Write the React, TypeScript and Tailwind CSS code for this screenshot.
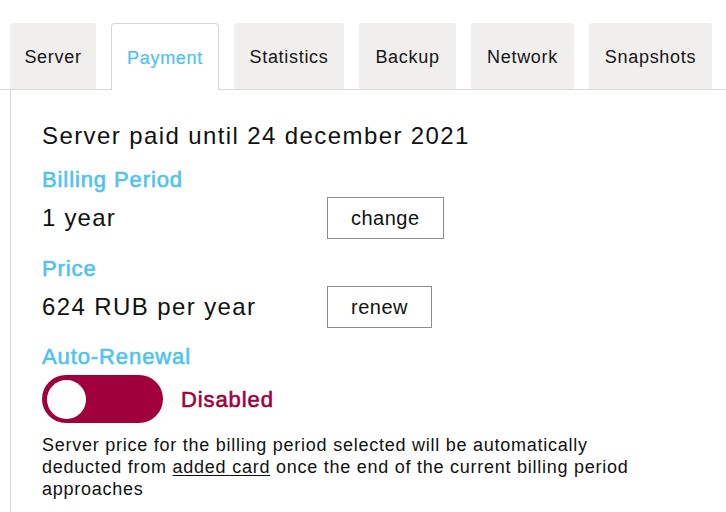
import React from "react";

const tabs = [
  { label: "Server", w: "w-[86px]" },
  { label: "Payment", w: "w-[108px]", active: true },
  { label: "Statistics", w: "w-[110px]" },
  { label: "Backup", w: "w-[97px]" },
  { label: "Network", w: "w-[103px]" },
  { label: "Snapshots", w: "w-[123px]" },
];

export default function App() {
  return (
    <div
      className="w-[726px] h-[512px] overflow-hidden bg-white text-[#111111]"
      style={{ fontFamily: '"Liberation Sans", Arial, sans-serif' }}
    >
      <div className="pt-[23px] pl-[10px] border-b border-[#d9d9d9] flex gap-[15px] h-[90px]">
        {tabs.map((t) =>
          t.active ? (
            <div
              key={t.label}
              className={`${t.w} h-[67px] -mb-px bg-white border border-b-0 border-[#d6d6d6] rounded-t-[4px] flex items-center justify-center pt-[3px] text-[18px] tracking-[0.7px] text-[#4ec3ef] [-webkit-text-stroke:0.2px_#4ec3ef]`}
            >
              {t.label}
            </div>
          ) : (
            <div
              key={t.label}
              className={`${t.w} h-[66px] bg-[#f0efee] rounded-t-[3px] flex items-center justify-center pt-[2px] text-[18px] tracking-[0.7px] text-[#151515]`}
            >
              {t.label}
            </div>
          )
        )}
      </div>
      <div className="ml-[10px] border-l border-[#d6d6d6] pl-[31px] pt-[30px] h-[422px]">
        <div className="text-[24px] leading-[32px] tracking-[1.4px]">
          Server paid until 24 december 2021
        </div>
        <div className="mt-[14px] text-[22px] leading-[28px] tracking-[0.9px] text-[#4ec3ef] [-webkit-text-stroke:0.6px_#4ec3ef]">
          Billing Period
        </div>
        <div className="mt-[3px] flex items-center h-[42px]">
          <div className="w-[285px] text-[24px] tracking-[1.2px]">1 year</div>
          <button className="h-[42px] px-[23px] border border-[#8c8c8c] bg-white text-[20px] tracking-[0.5px] text-[#111111]">
            change
          </button>
        </div>
        <div className="mt-[16px] text-[22px] leading-[28px] tracking-[0.9px] text-[#4ec3ef] [-webkit-text-stroke:0.6px_#4ec3ef]">
          Price
        </div>
        <div className="mt-[3px] flex items-center h-[42px]">
          <div className="w-[285px] text-[24px] tracking-[1.4px]">624 RUB per year</div>
          <button className="h-[42px] px-[23px] border border-[#8c8c8c] bg-white text-[20px] tracking-[0.5px] text-[#111111]">
            renew
          </button>
        </div>
        <div className="mt-[15px] text-[22px] leading-[28px] tracking-[0.9px] text-[#4ec3ef] [-webkit-text-stroke:0.6px_#4ec3ef]">
          Auto-Renewal
        </div>
        <div className="mt-[4px] flex items-center gap-[18px]">
          <div className="w-[121px] h-[48px] rounded-full bg-[#a0003b] flex items-center pl-[5px]">
            <div className="w-[39px] h-[39px] rounded-full bg-white" />
          </div>
          <div className="text-[22px] tracking-[0.9px] text-[#a0003b] [-webkit-text-stroke:0.6px_#a0003b]">
            Disabled
          </div>
        </div>
        <div className="mt-[11px] text-[18px] leading-[22px] tracking-[0.75px] w-[600px]">
          Server price for the billing period selected will be automatically
          deducted from <span className="underline underline-offset-2">added card</span> once the
          end of the current billing period approaches
        </div>
      </div>
    </div>
  );
}
